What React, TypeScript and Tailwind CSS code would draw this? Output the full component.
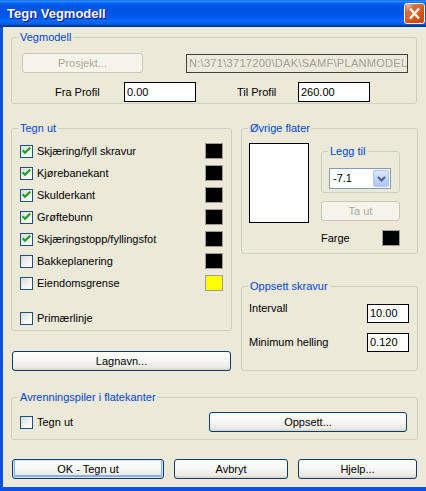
import type { ReactNode } from "react";

const btnBase =
  "flex items-center justify-center rounded-[3px] border text-[11px] leading-[13px]";
const btnNormal =
  "border-[#003C74] bg-[linear-gradient(180deg,#FFFFFF_0%,#F7F7F4_45%,#ECEBE6_85%,#D6D0C5_100%)] text-black";
const btnDisabled = "border-[#C9C7BA] bg-[#F5F4EA] text-[#ACA899]";

function Button({
  children,
  className = "",
  disabled = false,
  isDefault = false,
}: {
  children: ReactNode;
  className?: string;
  disabled?: boolean;
  isDefault?: boolean;
}) {
  return (
    <div
      className={`${btnBase} ${disabled ? btnDisabled : btnNormal} ${
        isDefault ? "shadow-[inset_0_0_0_1px_#CEE7FF,inset_0_-1px_0_2px_#89ADE4]" : ""
      } ${className}`}
    >
      {children}
    </div>
  );
}

function Group({
  title,
  className = "",
  children,
}: {
  title: string;
  className?: string;
  children?: ReactNode;
}) {
  return (
    <div className={`relative rounded-[3px] border border-[#D0D0BF] ${className}`}>
      <span className="absolute -top-[7px] left-[6px] bg-[#ECE9D8] px-[2px] text-[11px] leading-[13px] text-[#0046D5]">
        {title}
      </span>
      {children}
    </div>
  );
}

function Check({ checked }: { checked?: boolean }) {
  return (
    <span className="flex h-[13px] w-[13px] shrink-0 items-center justify-center border border-[#1C5180] bg-[linear-gradient(135deg,#DCDCD7_0%,#F4F4F1_60%,#FFFFFF_100%)]">
      {checked ? (
        <svg width="11" height="11" viewBox="0 0 11 11">
          <path d="M1.6 4.2 L4 6.7 L9.2 1.6" stroke="#21A121" strokeWidth="2.2" fill="none" />
        </svg>
      ) : null}
    </span>
  );
}

function Swatch({ color = "bg-black" }: { color?: string }) {
  return <span className={`h-[16px] w-[18px] shrink-0 border border-[#A09E94] ${color}`} />;
}

function Field({ value, className = "" }: { value: string; className?: string }) {
  return (
    <div
      className={`flex items-center border border-black bg-white pl-[2px] text-[11px] leading-[13px] text-black ${className}`}
    >
      {value}
    </div>
  );
}

const layers = [
  { label: "Skjæring/fyll skravur", checked: true, color: "bg-black" },
  { label: "Kjørebanekant", checked: true, color: "bg-black" },
  { label: "Skulderkant", checked: true, color: "bg-black" },
  { label: "Grøftebunn", checked: true, color: "bg-black" },
  { label: "Skjæringstopp/fyllingsfot", checked: true, color: "bg-black" },
  { label: "Bakkeplanering", checked: false, color: "bg-black" },
  { label: "Eiendomsgrense", checked: false, color: "bg-[#FFFF00]" },
];

export default function App() {
  return (
    <div className="flex h-[491px] w-[426px] flex-col overflow-hidden font-['Liberation_Sans',Arial,sans-serif] text-[11px] leading-[13px] text-black">
      {/* title bar */}
      <div className="flex h-[27px] shrink-0 items-center justify-between bg-[linear-gradient(180deg,#0058EE_0%,#3593FF_4%,#288EFF_6%,#127DFF_8%,#036FFC_10%,#0262EE_14%,#0057E5_20%,#0054E3_24%,#0055EB_56%,#005BF5_66%,#026AFE_76%,#0062EF_86%,#0052D6_92%,#0040AB_94%,#003092_100%)] pl-[7px] pr-[1px]">
        <span className="text-[13px] leading-[16px] font-bold text-white [text-shadow:1px_1px_#0F1089]">
          Tegn Vegmodell
        </span>
        <div className="flex h-[21px] w-[21px] items-center justify-center rounded-[3px] border border-white bg-[radial-gradient(circle_at_90%_90%,#CC4600_0%,#DC6527_55%,#CD7546_70%,#FFCCB2_90%,#FFFFFF_100%)] shadow-[inset_0_-1px_2px_1px_#DA4600]">
          <svg width="19" height="19" viewBox="0 0 19 19">
            <path d="M5 4.5 L14 14.5 M14 4.5 L5 14.5" stroke="white" strokeWidth="2.4" fill="none" />
          </svg>
        </div>
      </div>

      {/* body */}
      <div className="flex flex-1 flex-col border-b-[4px] border-l-[3px] border-[#0A53E2] bg-[#ECE9D8] pl-[8px]">
        <Group title="Vegmodell" className="mt-[10px] h-[67px] w-[406px]">
          <div className="mt-[15px] flex items-start">
            <Button disabled className="ml-[10px] h-[20px] w-[121px]">
              Prosjekt...
            </Button>
            <div className="ml-[43px] mt-[1px] flex h-[19px] w-[222px] items-center overflow-hidden border border-[#404040] pl-[2px] tracking-[0.3px] whitespace-nowrap text-[#A0A0A0]">
              N:\371\3717200\DAK\SAMF\PLANMODEL
            </div>
          </div>
          <div className="mt-[9px] flex items-center">
            <span className="ml-[43px] w-[69px]">Fra Profil</span>
            <Field value="0.00" className="h-[20px] w-[72px]" />
            <span className="ml-[41px] w-[61px]">Til Profil</span>
            <Field value="260.00" className="h-[20px] w-[72px]" />
          </div>
        </Group>

        <div className="mt-[24px] flex">
          {/* left column */}
          <div className="flex w-[221px] flex-col">
            <Group title="Tegn ut" className="h-[203px] w-[221px]">
              <div className="mt-[14px] flex flex-col gap-[6px] px-[8px]">
                {layers.map((l) => (
                  <div key={l.label} className="flex h-[16px] items-center justify-between">
                    <div className="flex items-center gap-[4px]">
                      <Check checked={l.checked} />
                      <span>{l.label}</span>
                    </div>
                    <Swatch color={l.color} />
                  </div>
                ))}
                <div className="mt-[13px] flex h-[16px] items-center gap-[4px]">
                  <Check />
                  <span>Primærlinje</span>
                </div>
              </div>
            </Group>
            <Button className="ml-[1px] mt-[20px] h-[20px] w-[219px]">Lagnavn...</Button>
          </div>

          {/* right column */}
          <div className="ml-[9px] flex w-[177px] flex-col">
            <Group title="Øvrige flater" className="h-[126px] w-[177px]">
              <div className="flex">
                <div className="ml-[7px] mt-[14px] h-[80px] w-[60px] border border-black bg-white" />
                <div className="ml-[12px] mt-[22px] flex w-[79px] flex-col">
                  <Group title="Legg til" className="h-[42px] w-[79px]">
                    <div className="ml-[7px] mt-[16px] flex h-[21px] w-[62px] items-center justify-between border border-[#7F9DB9] bg-white pl-[3px] pr-[1px]">
                      <span>-7.1</span>
                      <span className="flex h-[17px] w-[16px] items-center justify-center rounded-[2px] border border-[#B2C6F3] bg-[linear-gradient(180deg,#DDE8FE_0%,#C3D4FC_50%,#B2C6F5_100%)]">
                        <svg width="9" height="6" viewBox="0 0 9 6">
                          <path d="M1 1 L4.5 4.5 L8 1" stroke="#4D6185" strokeWidth="2" fill="none" />
                        </svg>
                      </span>
                    </div>
                  </Group>
                  <Button disabled className="mt-[8px] h-[20px] w-[79px]">
                    Ta ut
                  </Button>
                  <div className="mt-[9px] flex h-[16px] items-center justify-between">
                    <span>Farge</span>
                    <Swatch />
                  </div>
                </div>
              </div>
            </Group>

            <Group title="Oppsett skravur" className="mt-[32px] h-[85px] w-[177px]">
              <div className="mt-[17px] flex items-start justify-between pl-[7px] pr-[8px]">
                <span className="-mt-[2px]">Intervall</span>
                <Field value="10.00" className="h-[19px] w-[42px]" />
              </div>
              <div className="mt-[10px] flex items-center justify-between pl-[7px] pr-[8px]">
                <span>Minimum helling</span>
                <Field value="0.120" className="h-[19px] w-[42px]" />
              </div>
            </Group>
          </div>
        </div>

        <Group title="Avrenningspiler i flatekanter" className="mt-[26px] h-[43px] w-[407px]">
          <div className="mt-[14px] flex items-center justify-between pl-[8px] pr-[10px]">
            <div className="flex items-center gap-[4px]">
              <Check />
              <span>Tegn ut</span>
            </div>
            <Button className="h-[20px] w-[198px]">Oppsett...</Button>
          </div>
        </Group>

        <div className="ml-[1px] mt-[19px] flex gap-[10px]">
          <Button isDefault className="h-[20px] w-[152px]">
            OK - Tegn ut
          </Button>
          <Button className="h-[20px] w-[114px]">Avbryt</Button>
          <Button className="h-[20px] w-[119px]">Hjelp...</Button>
        </div>
      </div>
    </div>
  );
}
